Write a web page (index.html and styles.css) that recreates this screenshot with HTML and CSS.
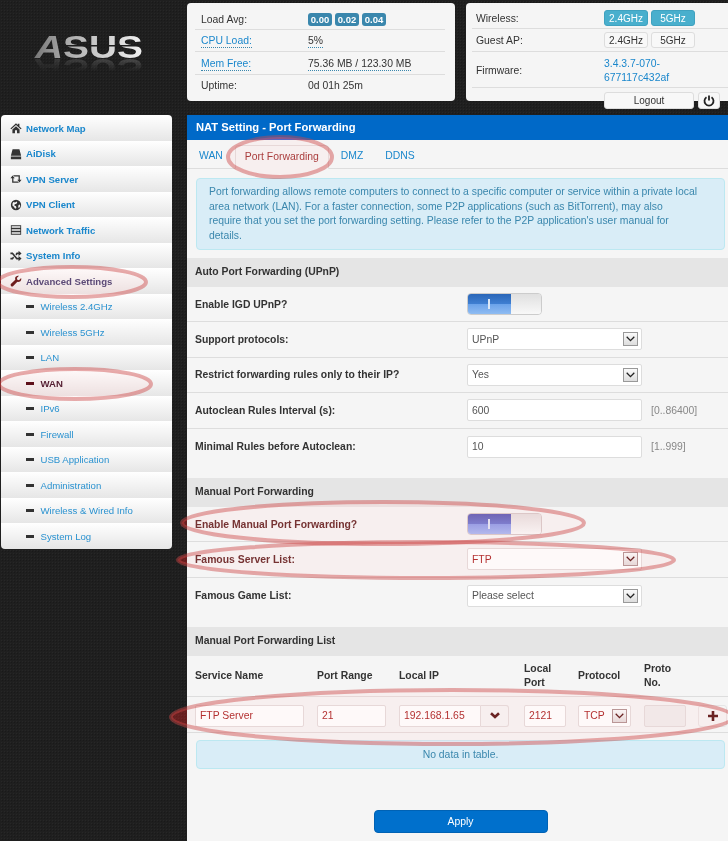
FILE: index.html
```html
<!DOCTYPE html>
<html lang="en">

<head>
    <meta charset="UTF-8">
    <meta name="viewport" content="width=device-width, initial-scale=1.0">
    <title>NAT Setting - Port Forwarding</title>
    <link rel="stylesheet" href="styles.css">
</head>

<body>
    <div class="page">

        <aside class="side">
            <div class="logo-box">
                <svg class="logo" width="108" height="36" viewBox="0 0 108 36">
                    <defs>
                        <linearGradient id="logo-fill" x1="0" y1="0" x2="1" y2="0">
                            <stop offset="0" stop-color="#777" />
                            <stop offset="0.3" stop-color="#aaa" />
                            <stop offset="0.6" stop-color="#ccc" />
                            <stop offset="1" stop-color="#f0f0f0" />
                        </linearGradient>
                    </defs>
                    <text x="0" y="29" class="logo-text" textLength="108" lengthAdjust="spacingAndGlyphs" fill="url(#logo-fill)"><tspan class="logo-a">A</tspan>SUS</text>
                    <rect x="26" y="16" width="82" height="1.500" fill="#1e1e1e" />
                </svg>
            </div>

            <nav class="menu">
                <a class="menu-item" href="#">
                    <svg class="ico" viewBox="0 0 14 14"><path d="M7 1.500 0.500 7.500l1 1L7 3.500l5.500 5 1-1L11 5.200V2H9v1.400zM2.800 8.800V13h3V9.500h2.400V13h3V8.800L7 5z" /></svg>
                    Network Map
                </a>
                <a class="menu-item" href="#">
                    <svg class="ico" viewBox="0 0 14 14"><path d="M3 1.500h8l2 7.500H1zM1 9.800h12V13H1z" /></svg>
                    AiDisk
                </a>
                <a class="menu-item" href="#">
                    <svg class="ico" viewBox="0 0 14 14"><path d="M0.500 6 3 3 5.500 6H4v4h5l1.500 1.500H2.500V6zM13.500 8 11 11 8.500 8H10V4H5L3.500 2.500h8V8z" /></svg>
                    VPN Server
                </a>
                <a class="menu-item" href="#">
                    <svg class="ico" viewBox="0 0 14 14"><path fill-rule="evenodd" d="M7 1a6 6 0 1 0 0 12A6 6 0 0 0 7 1zM4 3.500l2 .5 1.500-1 1 1-1 1.500-2 .5L5 7.500l2 1 .5 2L6 11.500 4.500 9 2.800 7.500 3 5zM10 7l1.500-.5.5 2-1.500 2-1-1z" /></svg>
                    VPN Client
                </a>
                <a class="menu-item" href="#">
                    <svg class="ico" viewBox="0 0 14 14"><path fill-rule="evenodd" d="M1 1.500h12v11H1zM2 2.500v1.800h10V2.500zM2 6v1.800h10V6zM2 9.500v1.800h10V9.500z" /></svg>
                    Network Traffic
                </a>
                <a class="menu-item" href="#">
                    <svg class="ico" viewBox="0 0 14 14"><path d="M0.500 3h2.800l5 6H10V7l3.500 3-3.500 3v-2H7.500l-5-6H0.500zM10 1l3.500 3L10 7V5H8.700L7.500 6.400 6.300 5 7.700 3H10zM0.500 9h2L3.600 7.700l1.200 1.400L3.300 11H0.500z" /></svg>
                    System Info
                </a>
                <a class="menu-item menu-current" href="#">
                    <svg class="ico" viewBox="0 0 14 14"><path d="M13 3.500 10.500 6 8.500 5.500 8 3.500 10.500 1C8.500.3 6.300 1.500 6 3.500c-.1.700 0 1.300.200 1.900L1 10.500a1.800 1.800 0 0 0 2.500 2.500l5.100-5.200c.6.200 1.200.3 1.900.2 2-.3 3.200-2.500 2.500-4.500z" /></svg>
                    Advanced Settings
                </a>
                <a class="menu-item menu-sub" href="#"><i class="dash"></i>Wireless 2.4GHz</a>
                <a class="menu-item menu-sub" href="#"><i class="dash"></i>Wireless 5GHz</a>
                <a class="menu-item menu-sub" href="#"><i class="dash"></i>LAN</a>
                <a class="menu-item menu-sub menu-sub-current" href="#"><i class="dash"></i>WAN</a>
                <a class="menu-item menu-sub" href="#"><i class="dash"></i>IPv6</a>
                <a class="menu-item menu-sub" href="#"><i class="dash"></i>Firewall</a>
                <a class="menu-item menu-sub" href="#"><i class="dash"></i>USB Application</a>
                <a class="menu-item menu-sub" href="#"><i class="dash"></i>Administration</a>
                <a class="menu-item menu-sub" href="#"><i class="dash"></i>Wireless &amp; Wired Info</a>
                <a class="menu-item menu-sub" href="#"><i class="dash"></i>System Log</a>
            </nav>
        </aside>

        <div class="content">
            <header class="top">
                <section class="card card-load">
                    <div class="stat">
                        <span class="stat-name">Load Avg:</span>
                        <span class="stat-val"><b class="badge">0.00</b><b class="badge">0.02</b><b class="badge">0.04</b></span>
                    </div>
                    <div class="stat">
                        <span class="stat-name"><span class="link dotted">CPU Load:</span></span>
                        <span class="stat-val"><span class="dotted">5%</span></span>
                    </div>
                    <div class="stat">
                        <span class="stat-name"><span class="link dotted">Mem Free:</span></span>
                        <span class="stat-val"><span class="dotted">75.36 MB / 123.30 MB</span></span>
                    </div>
                    <div class="stat">
                        <span class="stat-name">Uptime:</span>
                        <span class="stat-val">0d 01h 25m</span>
                    </div>
                </section>

                <section class="card card-radio">
                    <div class="stat">
                        <span class="stat-name">Wireless:</span>
                        <span class="stat-val"><button class="pill pill-on">2.4GHz</button><button class="pill pill-on">5GHz</button></span>
                    </div>
                    <div class="stat">
                        <span class="stat-name">Guest AP:</span>
                        <span class="stat-val"><button class="pill">2.4GHz</button><button class="pill">5GHz</button></span>
                    </div>
                    <div class="stat stat-fw">
                        <span class="stat-name">Firmware:</span>
                        <span class="stat-val link">3.4.3.7-070-<br>677117c432af</span>
                    </div>
                    <div class="logout-row">
                        <button class="pill logout">Logout</button>
                        <button class="pill power">
                            <svg width="12" height="12" viewBox="0 0 12 12" fill="none" stroke="#222" stroke-width="1.800">
                                <path d="M3.500 2.300a4.500 4.500 0 1 0 5 0" />
                                <path d="M6 .5v5" />
                            </svg>
                        </button>
                    </div>
                </section>
            </header>

            <main class="panel">
                <h1 class="panel-title">NAT Setting - Port Forwarding</h1>

                <ul class="tabs">
                    <li><a href="#">WAN</a></li>
                    <li><a class="tab-on" href="#">Port Forwarding</a></li>
                    <li><a href="#">DMZ</a></li>
                    <li><a href="#">DDNS</a></li>
                </ul>

                <div class="alert alert-intro">
                    Port forwarding allows remote computers to connect to a specific computer or service within a private local<br>
                    area network (LAN). For a faster connection, some P2P applications (such as BitTorrent), may also<br>
                    require that you set the port forwarding setting. Please refer to the P2P application's user manual for<br>
                    details.
                </div>

                <h2 class="section">Auto Port Forwarding (UPnP)</h2>
                <div class="field">
                    <label>Enable IGD UPnP?</label>
                    <div class="toggle"><span class="toggle-on"></span><span class="toggle-off"></span></div>
                </div>
                <div class="field">
                    <label>Support protocols:</label>
                    <div class="select"><span>UPnP</span><i class="arrow"><svg width="9" height="6" viewBox="0 0 9 6"><path d="M.7.8 4.500 4.600 8.300.8" /></svg></i></div>
                </div>
                <div class="field">
                    <label>Restrict forwarding rules only to their IP?</label>
                    <div class="select"><span>Yes</span><i class="arrow"><svg width="9" height="6" viewBox="0 0 9 6"><path d="M.7.8 4.500 4.600 8.300.8" /></svg></i></div>
                </div>
                <div class="field">
                    <label>Autoclean Rules Interval (s):</label>
                    <input class="text" type="text" value="600">
                    <span class="hint">[0..86400]</span>
                </div>
                <div class="field field-last">
                    <label>Minimal Rules before Autoclean:</label>
                    <input class="text" type="text" value="10">
                    <span class="hint">[1..999]</span>
                </div>

                <h2 class="section">Manual Port Forwarding</h2>
                <div class="field marked">
                    <label>Enable Manual Port Forwarding?</label>
                    <div class="toggle"><span class="toggle-on"></span><span class="toggle-off"></span></div>
                </div>
                <div class="field marked">
                    <label>Famous Server List:</label>
                    <div class="select"><span>FTP</span><i class="arrow"><svg width="9" height="6" viewBox="0 0 9 6"><path d="M.7.8 4.500 4.600 8.300.8" /></svg></i></div>
                </div>
                <div class="field field-last">
                    <label>Famous Game List:</label>
                    <div class="select"><span>Please select</span><i class="arrow"><svg width="9" height="6" viewBox="0 0 9 6"><path d="M.7.8 4.500 4.600 8.300.8" /></svg></i></div>
                </div>

                <h2 class="section">Manual Port Forwarding List</h2>
                <div class="grid grid-head">
                    <div>Service Name</div>
                    <div>Port Range</div>
                    <div>Local IP</div>
                    <div>Local<br>Port</div>
                    <div>Protocol</div>
                    <div>Proto<br>No.</div>
                </div>
                <div class="grid grid-row marked">
                    <input class="text w-name" type="text" value="FTP Server">
                    <input class="text w-range" type="text" value="21">
                    <div class="ip-group">
                        <input class="text w-ip" type="text" value="192.168.1.65">
                        <button class="ip-btn"><svg width="10" height="7" viewBox="0 0 10 7"><path d="M1 1.200 5 5l4-3.800" /></svg></button>
                    </div>
                    <input class="text w-port" type="text" value="2121">
                    <div class="select select-small"><span>TCP</span><i class="arrow"><svg width="9" height="6" viewBox="0 0 9 6"><path d="M.7.8 4.500 4.600 8.300.8" /></svg></i></div>
                    <input class="text w-proto" type="text" disabled>
                    <button class="add-btn">
                        <svg width="10" height="10" viewBox="0 0 10 10"><path d="M3.700 0h2.600v3.700H10v2.600H6.300V10H3.700V6.300H0V3.700h3.700z" /></svg>
                    </button>
                </div>
                <div class="alert alert-empty">No data in table.</div>

                <div class="actions"><button class="apply">Apply</button></div>
            </main>
        </div>

        <!-- red rings drawn over the screenshot -->
        <svg class="marks marks-fill" width="728" height="841">
            <ellipse cx="280" cy="157" rx="52" ry="20" />
            <ellipse cx="72" cy="282" rx="74" ry="15" />
            <ellipse cx="75" cy="384" rx="76" ry="15" />
            <ellipse cx="383" cy="523" rx="201" ry="21" />
            <ellipse cx="426" cy="560" rx="248" ry="18" />
            <ellipse cx="452" cy="717" rx="281" ry="27" />
        </svg>
        <svg class="marks marks-line" width="728" height="841">
            <ellipse cx="280" cy="157" rx="52" ry="20" />
            <ellipse cx="72" cy="282" rx="74" ry="15" />
            <ellipse cx="75" cy="384" rx="76" ry="15" />
            <ellipse cx="383" cy="523" rx="201" ry="21" />
            <ellipse cx="426" cy="560" rx="248" ry="18" />
            <ellipse cx="452" cy="717" rx="281" ry="27" />
        </svg>
    </div>
</body>

</html>
```

FILE: styles.css
```css
* {
    box-sizing: border-box;
}

html, body {
    margin: 0;
    padding: 0;
}

body {
    width: 728px;
    height: 841px;
    overflow: hidden;
    font-family: "Liberation Sans", Arial, sans-serif;
    font-size: 10.4px;
    color: #333;
    background-color: #1f1f1f;
    background-image:
        radial-gradient(rgba(255, 255, 255, 0.035) 1px, transparent 1px),
        radial-gradient(rgba(0, 0, 0, 0.18) 1px, transparent 1px);
    background-size: 3px 3px, 3px 3px;
    background-position: 0 0, 1px 1px;
}

a {
    text-decoration: none;
}

button, input {
    font-family: inherit;
    font-size: 10.4px;
}

.page {
    position: relative;
    display: grid;
    grid-template-columns: 187px 541px;
    height: 841px;
}

/* left column */
.logo-box {
    height: 115px;
    padding: 29px 0 0 35px;
}

.logo {
    display: block;
    overflow: visible;
    -webkit-box-reflect: below -13px linear-gradient(transparent 45%, rgba(255, 255, 255, 0.2) 80%);
}

.logo-text {
    font-family: "Liberation Sans", Arial, sans-serif;
    font-weight: bold;
    font-size: 32px;
}

.logo-a {
    font-style: italic;
}

.menu {
    margin-left: 1px;
    width: 171px;
    border-radius: 4px;
    overflow: hidden;
}

.menu-item {
    display: flex;
    align-items: center;
    height: 25.5px;
    padding: 1px 0 0 9px;
    font-weight: bold;
    font-size: 9.6px;
    color: #1a87cc;
    background: linear-gradient(#fff, #e6e6e6);
}

.ico {
    width: 12px;
    height: 12px;
    margin-right: 4px;
    fill: #333;
}

.menu-current {
    color: #0a4a78;
}

.menu-current .ico {
    fill: #281e1e;
}

.menu-sub {
    padding-left: 25px;
    font-weight: normal;
    color: #2a92d0;
}

.dash {
    width: 8px;
    height: 3px;
    margin-right: 7px;
    background: #333;
}

.menu-sub-current {
    font-weight: bold;
    color: #001e32;
}

.menu-sub-current .dash {
    background: #0f0f19;
}

.menu-sub .dash {
    margin-right: 6.500px;
}

/* top status cards */
.top {
    display: flex;
    gap: 11px;
    height: 115px;
    padding-top: 3px;
}

.card {
    height: 98px;
    background: #f5f5f5;
    border-radius: 4px;
}

.card-load {
    width: 268px;
    padding: 4px 10px 0 8px;
}

.card-radio {
    flex: 1;
    padding: 5px 0 0 6px;
    border-radius: 4px 0 0 4px;
}

.stat {
    display: flex;
    align-items: center;
    height: 22.500px;
    border-bottom: 1px solid #ddd;
}

.card-load .stat {
    padding-top: 1px;
}

.card-load .stat:first-child {
    padding-top: 3px;
}

.card-load .stat-name {
    width: 113px;
    padding-left: 6px;
}

.card-load .stat:last-child {
    height: 21px;
    padding-top: 0;
    border-bottom: none;
}

.card-radio .stat {
    height: 23px;
}

.card-radio .stat:first-child {
    height: 21px;
}

.card-radio .stat-name {
    width: 132px;
    padding-left: 4px;
}

.card-radio .stat-fw {
    height: 36px;
    padding-top: 2px;
    line-height: 14px;
}

.link {
    color: #1a87cc;
}

.dotted {
    padding-bottom: 1px;
    border-bottom: 1px dotted #3a87ad;
}

.badge {
    display: inline-block;
    width: 24px;
    margin-right: 3px;
    height: 13px;
    line-height: 13px;
    text-align: center;
    font-size: 9.500px;
    color: #fff;
    background: #3a87ad;
    border-radius: 3px;
}

.pill {
    width: 44px;
    height: 16px;
    margin-right: 3px;
    padding: 0;
    font-size: 10px;
    color: #333;
    background: #f8f8f8;
    border: 1px solid #ddd;
    border-radius: 3px;
}

.pill-on {
    color: #fff;
    background: #49afcd;
    border-color: #3fa2c0;
}

.logout-row {
    display: flex;
    margin: 4px 0 0 132px;
}

.logout {
    width: 90px;
    height: 17px;
    margin-right: 4px;
}

.power {
    display: flex;
    align-items: center;
    justify-content: center;
    width: 22px;
    height: 17px;
}

/* main panel */
.panel {
    height: 726px;
    background: #f5f5f5;
}

.panel-title {
    margin: 0;
    height: 25px;
    padding-left: 9px;
    line-height: 25px;
    font-size: 11.2px;
    font-weight: bold;
    color: #fff;
    background: #0069c8;
}

.tabs {
    display: flex;
    height: 29px;
    margin: 0;
    padding: 5px 0 0 2px;
    list-style: none;
    border-bottom: 1px solid #ddd;
}

.tabs li {
    margin-right: 2px;
}

.tabs a {
    display: block;
    height: 24px;
    padding: 0 10px;
    line-height: 22px;
    color: #1a87cc;
    border-radius: 4px 4px 0 0;
}

.tabs .tab-on {
    color: #803c3c;
    background: #f5f5f5;
    border: 1px solid #ddd;
    border-bottom-color: #f5f5f5;
    padding: 0 9px;
}

.alert {
    margin-left: 9px;
    width: 529px;
    color: #3a87ad;
    background: #d9edf7;
    border: 1px solid #bce8f1;
    border-radius: 4px;
}

.alert-intro {
    margin-top: 9px;
    height: 72px;
    padding: 6px 12px;
    line-height: 14.600px;
}

.section {
    margin: 8px 0 0;
    height: 29px;
    padding-left: 8px;
    line-height: 28px;
    font-size: 10.4px;
    font-weight: bold;
    color: #333;
    background: #e5e5e5;
}

.field {
    display: flex;
    align-items: center;
    height: 35.500px;
    padding-left: 8px;
    border-bottom: 1px solid #ddd;
}

.section + .field {
    height: 35px;
}

.field label {
    width: 272px;
    font-weight: bold;
    color: #333;
}

.field-last {
    height: 36px;
    border-bottom: none;
    margin-bottom: 13.500px;
}

.toggle {
    display: flex;
    width: 75px;
    height: 22px;
    border: 1px solid #ccc;
    border-radius: 4px;
    overflow: hidden;
}

.toggle-on {
    position: relative;
    width: 43px;
    background: linear-gradient(#2a66b8, #3f7fd2 50%, #6aa2ea 50%, #8fbcf2);
}

.toggle-on::after {
    content: "";
    position: absolute;
    left: 20px;
    top: 5px;
    width: 2px;
    height: 10px;
    background: #dde8f5;
}

.toggle-off {
    flex: 1;
    background: linear-gradient(#e0e0e0, #f8f8f8);
}

.select, .text {
    width: 175px;
    height: 22px;
    background: #fff;
    border: 1px solid #ddd;
    border-radius: 2px;
    color: #555;
}

.select {
    display: flex;
    align-items: center;
    justify-content: space-between;
    padding: 0 3px 0 4px;
}

.text {
    padding: 0 4px;
    outline: none;
}

.arrow {
    display: flex;
    align-items: center;
    justify-content: center;
    width: 15px;
    height: 14px;
    background: linear-gradient(#fafafa, #ddd);
    border: 1px solid #999;
}

.arrow svg {
    fill: none;
    stroke: #222;
    stroke-width: 1.300;
}

.hint {
    margin-left: 9px;
    color: #888;
}

/* port forwarding list */
.grid {
    display: grid;
    grid-template-columns: 122px 82px 125px 54px 66px 54px 30px;
    align-items: center;
    padding-left: 8px;
}

.grid-head {
    height: 41px;
    font-weight: bold;
    line-height: 14.500px;
    border-bottom: 1px solid #ddd;
}

.grid-row {
    height: 36px;
    padding-top: 2px;
    border-bottom: 1px solid #ddd;
}

.w-name {
    width: 109px;
}

.w-range {
    width: 69px;
}

.ip-group {
    display: flex;
    width: 110px;
}

.w-ip {
    width: 82px;
    border-radius: 2px 0 0 2px;
}

.ip-btn {
    width: 28px;
    height: 22px;
    padding: 0;
    background: #f5f5f5;
    border: 1px solid #ddd;
    border-left: none;
    border-radius: 0 3px 3px 0;
}

.ip-btn svg {
    fill: none;
    stroke: #222;
    stroke-width: 2.600;
}

.w-port {
    width: 42px;
}

.select-small {
    width: 53px;
    padding: 0 3px 0 5px;
}

.w-proto {
    width: 42px;
    background: #eee;
}

.add-btn {
    display: flex;
    align-items: center;
    justify-content: center;
    width: 29px;
    height: 22px;
    padding: 0;
    background: #f5f5f5;
    border: 1px solid #e5e5e5;
    border-radius: 3px;
}

.add-btn svg {
    fill: #222;
}

.alert-empty {
    margin-top: 7px;
    height: 29px;
    line-height: 27px;
    text-align: center;
}

.actions {
    display: flex;
    justify-content: center;
    margin-top: 41px;
    padding-left: 6px;
}

.apply {
    width: 174px;
    height: 23px;
    color: #fff;
    background: #0070cc;
    border: 1px solid #0062b4;
    border-radius: 4px;
}

/* things inside the red rings */
.marked .select span, .marked .text {
    color: #903030;
}

.marks {
    position: absolute;
    left: 0;
    top: 0;
    pointer-events: none;
}

.marks-fill {
    mix-blend-mode: screen;
    fill: #500000;
}

.marks-line {
    fill: rgba(210, 60, 60, 0.03);
    stroke: rgba(205, 70, 70, 0.45);
    stroke-width: 4;
}
```
